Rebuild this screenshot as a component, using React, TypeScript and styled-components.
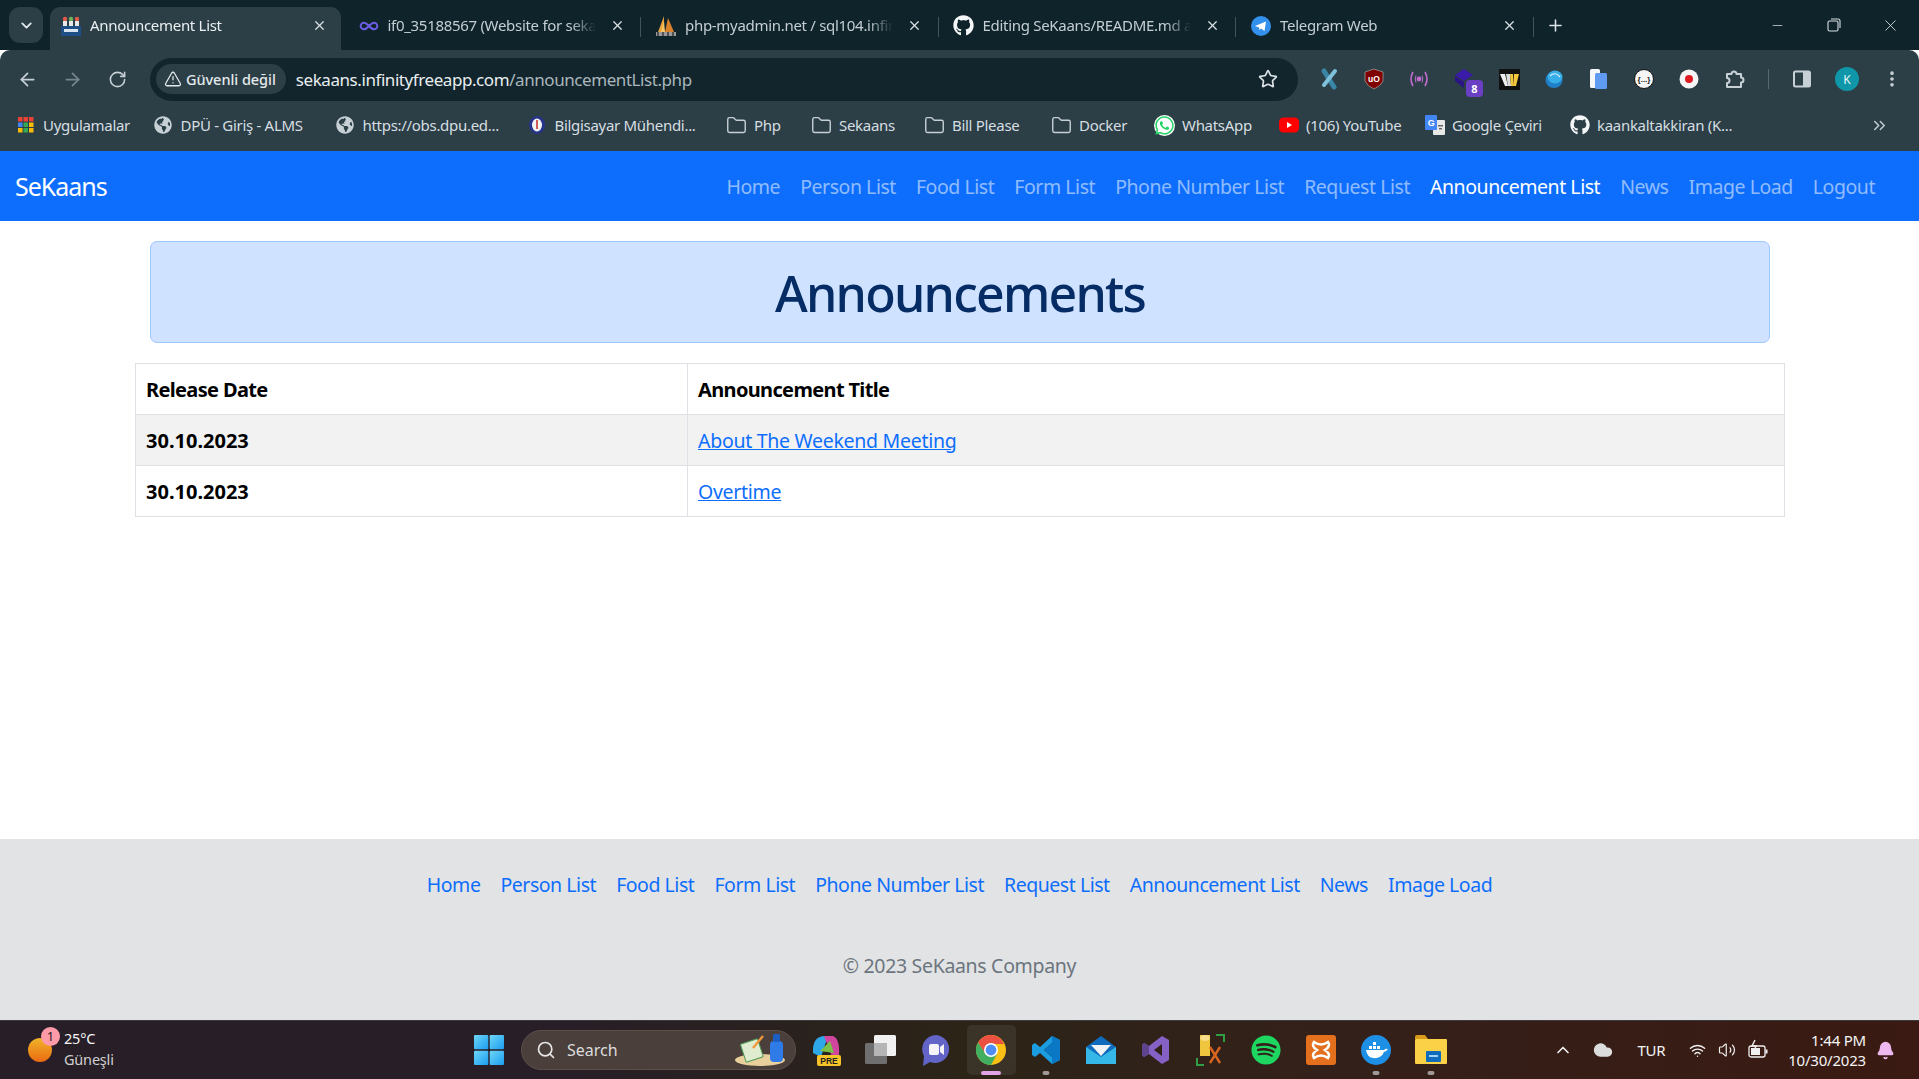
import React from 'react';
import styled, { createGlobalStyle } from 'styled-components';
import {
  ArrowLeft,
  ArrowRight,
  ChevronDown,
  ChevronUp,
  ChevronsRight,
  Folder,
  Minus,
  MoreVertical,
  Plus,
  RotateCw,
  Search,
  Star,
  TriangleAlert,
  Volume2,
  Wifi,
  X,
  Infinity as InfinityIcon,
  Bell,
  Cloud,
} from 'lucide-react';
import { FaGithub, FaGlobeAmericas, FaSpotify, FaWhatsapp } from 'react-icons/fa';

const UI_FONT = '"Noto Sans", "Open Sans", sans-serif';

const GlobalStyle = createGlobalStyle`
  html, body {
    margin: 0;
    padding: 0;
    background: #fff;
    font-family: ${UI_FONT};
  }
  * { box-sizing: border-box; }
`;

// ---- favicons and small drawings ----

const TeamFavicon = () => (
  <svg width="20" height="20" viewBox="0 0 20 20">
    <circle cx="4" cy="3" r="2.2" fill="#e25b4b" />
    <circle cx="10" cy="3" r="2.2" fill="#6fb35a" />
    <circle cx="16" cy="3" r="2.2" fill="#e25b4b" />
    <rect x="2" y="5" width="4" height="5" fill="#e8e8e8" />
    <rect x="8" y="5" width="4" height="5" fill="#e8e8e8" />
    <rect x="14" y="5" width="4" height="5" fill="#e8e8e8" />
    <rect x="0" y="10" width="20" height="10" fill="#1d4f86" />
    <rect x="3" y="13" width="14" height="3" fill="#d8e4f0" />
  </svg>
);

const PmaFavicon = () => (
  <svg width="22" height="22" viewBox="0 0 22 22">
    <polygon points="9,1 3,17 9,17" fill="#e8a33d" />
    <polygon points="13,3 10,17 19,17" fill="#d9822b" />
    <polygon points="9,6 6,17 10,17" fill="#f6c667" />
    <rect x="1" y="17" width="20" height="4" fill="#9a9a9a" />
    <path d="M3 17 V21 M8 17 V21 M13 17 V21 M18 17 V21" stroke="#222" strokeWidth="1.2" />
  </svg>
);

const TelegramFavicon = () => (
  <svg width="20" height="20" viewBox="0 0 20 20">
    <circle cx="10" cy="10" r="10" fill="#3390ec" />
    <polygon points="4,10 15,5.5 13.5,15 10,12.5 8.5,14 8,11.5" fill="#fff" />
  </svg>
);

const AppsGrid = () => (
  <svg width="16" height="16" viewBox="0 0 16 16">
    {['#ea4335', '#ea4335', '#ea4335', '#4285f4', '#34a853', '#fbbc05', '#fbbc05', '#34a853', '#fbbc05'].map(
      (color, i) => (
        <rect key={i} x={(i % 3) * 5.5} y={Math.floor(i / 3) * 5.5} width="4.5" height="4.5" fill={color} />
      ),
    )}
  </svg>
);

const DpuFavicon = () => (
  <svg width="18" height="18" viewBox="0 0 18 18">
    <ellipse cx="9" cy="9" rx="8" ry="9" fill="#27348b" />
    <ellipse cx="9" cy="9" rx="5" ry="6.5" fill="#f3f3f3" />
    <rect x="8.2" y="4" width="1.6" height="9" fill="#c8373a" />
  </svg>
);

const YoutubeFavicon = () => (
  <svg width="20" height="18" viewBox="0 0 20 18">
    <rect x="0" y="1.5" width="20" height="15" rx="4.5" fill="#f00" />
    <polygon points="8,6 8,12 13,9" fill="#fff" />
  </svg>
);

const TranslateFavicon = () => (
  <svg width="20" height="20" viewBox="0 0 20 20">
    <rect x="8" y="5" width="12" height="15" rx="1" fill="#e8e8e8" />
    <rect x="0" y="0" width="12" height="15" rx="1" fill="#4285f4" />
    <text x="6" y="11" fontSize="9" fontWeight="700" fill="#fff" textAnchor="middle" fontFamily="Liberation Sans">
      G
    </text>
    <rect x="13" y="10" width="5" height="1.5" fill="#666" />
    <rect x="14" y="13" width="3" height="1.5" fill="#666" />
  </svg>
);

const WhatsappFavicon = () => (
  <WhatsappBadge>
    <FaWhatsapp size={21} color="#25d366" />
  </WhatsappBadge>
);

const CrossExt = () => (
  <svg width="20" height="22" viewBox="0 0 20 22">
    <path d="M5 3 L15 19" stroke="#3a86a6" strokeWidth="5" strokeLinecap="round" />
    <path d="M16 3 L5 17" stroke="#7fc0da" strokeWidth="4" strokeLinecap="round" />
  </svg>
);

const UblockExt = () => (
  <svg width="20" height="22" viewBox="0 0 20 22">
    <path d="M10 1 L19 4 L19 13 Q17 18 10 21 Q3 18 1 13 L1 4 Z" fill="#800000" stroke="#9a9a9a" strokeWidth="0.8" />
    <text x="10" y="14" fontSize="8.5" fontWeight="700" fill="#fff" textAnchor="middle" fontFamily="Liberation Sans">
      uO
    </text>
  </svg>
);

const SignalExt = () => (
  <svg width="20" height="18" viewBox="0 0 20 18" fill="none" stroke="#c26bd0" strokeWidth="1.6">
    <circle cx="10" cy="9" r="1.6" fill="#c26bd0" />
    <path d="M4 2 Q0 9 4 16 M16 2 Q20 9 16 16" />
    <path d="M7 5.5 Q5.5 9 7 12.5 M13 5.5 Q14.5 9 13 12.5" strokeWidth="1" />
  </svg>
);

const StackExt = () => (
  <ExtBadgeWrap>
    <svg width="22" height="22" viewBox="0 0 22 22">
      <polygon points="11,1 20,7 11,13 2,7" fill="#3a1aa8" />
      <polygon points="2,8 11,14 11,20 2,13" fill="#2c1388" />
    </svg>
    <ExtBadge>8</ExtBadge>
  </ExtBadgeWrap>
);

const WExt = () => (
  <svg width="21" height="21" viewBox="0 0 21 21">
    <rect width="21" height="21" fill="#111" />
    <polygon points="1,5 6,5 9,17 6,17" fill="#eee" />
    <polygon points="7,5 11,5 12,17 9,17" fill="#ddd" />
    <polygon points="11,5 14,5 14,17 12,17" fill="#f4c83c" />
    <polygon points="15,5 20,5 17,17 14,17" fill="#f4c83c" />
  </svg>
);

const DiscExt = () => (
  <svg width="20" height="20" viewBox="0 0 20 20">
    <ellipse cx="10" cy="11" rx="8.5" ry="8" fill="#1f7fc9" />
    <ellipse cx="11" cy="8" rx="7.5" ry="6.5" fill="#37aee8" />
    <path d="M6 7 Q11 2 16 8" stroke="#d9f1fc" strokeWidth="1.2" fill="none" />
  </svg>
);

const PagesExt = () => (
  <svg width="18" height="20" viewBox="0 0 18 20">
    <rect x="0" y="0" width="10" height="19" rx="1.5" fill="#f5f7fa" />
    <rect x="5" y="4" width="12" height="16" rx="1.5" fill="#5f9bf0" />
  </svg>
);

const BracesExt = () => (
  <svg width="20" height="20" viewBox="0 0 20 20">
    <circle cx="10" cy="10" r="9.5" fill="#f5f5f5" stroke="#111" strokeWidth="1" />
    <text x="10" y="13" fontSize="8" fontWeight="700" fill="#222" textAnchor="middle" fontFamily="Liberation Sans">
      {'{...}'}
    </text>
  </svg>
);

const RecordExt = () => (
  <svg width="20" height="20" viewBox="0 0 20 20">
    <circle cx="10" cy="10" r="9.5" fill="#f5f5f5" />
    <circle cx="10" cy="10" r="4" fill="#e01b24" />
  </svg>
);

const ExtensionsPuzzle = () => (
  <svg width="22" height="22" viewBox="0 0 22 22" fill="none" stroke="#c6d0d5" strokeWidth="2" strokeLinejoin="round">
    <path d="M4 6 H8.5 A2.5 2.5 0 0 1 13.5 6 H18 V9.5 A2.5 2.5 0 0 1 18 14.5 V19 H4 V15 A2 2 0 0 0 4 10 Z" />
  </svg>
);

const SidebarIcon = () => (
  <svg width="18" height="18" viewBox="0 0 18 18">
    <rect x="1" y="1.5" width="16" height="15" rx="1.5" fill="none" stroke="#c6d0d5" strokeWidth="2" />
    <rect x="10" y="1.5" width="7" height="15" fill="#c6d0d5" />
  </svg>
);

const RestoreIcon = () => (
  <svg width="14" height="14" viewBox="0 0 14 14" fill="none" stroke="#d9e0e3" strokeWidth="1.1">
    <rect x="1" y="3" width="10" height="10" rx="1.5" />
    <path d="M4 1 H11 Q13 1 13 3 V10" />
  </svg>
);

const WindowsLogo = () => (
  <svg width="30" height="30" viewBox="0 0 30 30">
    <defs>
      <linearGradient id="win" x1="0" y1="0" x2="1" y2="1">
        <stop offset="0" stopColor="#6fd6f7" />
        <stop offset="1" stopColor="#1a9df0" />
      </linearGradient>
    </defs>
    <rect x="0" y="0" width="14.3" height="14.3" rx="1" fill="url(#win)" />
    <rect x="15.7" y="0" width="14.3" height="14.3" rx="1" fill="url(#win)" />
    <rect x="0" y="15.7" width="14.3" height="14.3" rx="1" fill="url(#win)" />
    <rect x="15.7" y="15.7" width="14.3" height="14.3" rx="1" fill="url(#win)" />
  </svg>
);

const SearchArt = () => (
  <svg width="56" height="34" viewBox="0 0 56 34">
    <ellipse cx="26" cy="27" rx="25" ry="6" fill="#e9cf9b" />
    <rect x="9" y="8" width="18" height="19" rx="1" fill="#dfeccf" stroke="#4f9a57" strokeWidth="1" transform="rotate(-18 18 18)" />
    <path d="M19 15 L29 3" stroke="#f0983a" strokeWidth="2.4" />
    <rect x="36" y="8" width="13" height="21" rx="4" fill="#2f7be8" />
    <rect x="39" y="1" width="7" height="8" rx="1.5" fill="#1b5fc4" />
  </svg>
);

const CopilotApp = () => (
  <svg width="32" height="34" viewBox="0 0 32 34">
    <path d="M3 20 Q2 4 14 3 L18 3 L11 24 Z" fill="#2ea7e8" />
    <path d="M14 3 L23 3 Q30 6 29 22 L22 24 Z" fill="#d0459e" />
    <path d="M10 18 L20 8 L24 20 Z" fill="#7bc148" />
    <rect x="7" y="22" width="24" height="11" rx="2" fill="#f6c428" />
    <text x="19" y="31" fontSize="8.5" fontWeight="700" fill="#222" textAnchor="middle" fontFamily="Liberation Sans">
      PRE
    </text>
  </svg>
);

const TaskViewApp = () => (
  <svg width="32" height="30" viewBox="0 0 32 30">
    <rect x="9" y="0" width="22" height="21" rx="1.5" fill="#f1f1f1" />
    <rect x="0" y="8" width="22" height="21" rx="1.5" fill="#6f6f6f" />
    <rect x="9" y="8" width="13" height="13" fill="#b5b5b5" />
  </svg>
);

const MeetApp = () => (
  <svg width="30" height="34" viewBox="0 0 30 34">
    <path d="M15 2 A14 14 0 1 1 9 29 L2 33 L3 23 A14 14 0 0 1 15 2 Z" fill="#6264c7" />
    <rect x="8" y="11" width="10" height="11" rx="2" fill="#f4f4f8" />
    <polygon points="19,14 23,11 23,22 19,19" fill="#f4f4f8" />
  </svg>
);

const ChromeApp = () => (
  <svg width="30" height="30" viewBox="0 0 30 30">
    <circle cx="15" cy="15" r="15" fill="#fbbc05" />
    <path d="M15 0 A15 15 0 0 0 2 7.5 L8.5 18 L15 9 H28 A15 15 0 0 0 15 0 Z" fill="#ea4335" />
    <path d="M2 7.5 A15 15 0 0 0 15 30 L21 19 L9 18 Z" fill="#34a853" />
    <circle cx="15" cy="15" r="7" fill="#fff" />
    <circle cx="15" cy="15" r="5.4" fill="#4285f4" />
  </svg>
);

const VscodeApp = () => (
  <svg width="30" height="30" viewBox="0 0 30 30">
    <path d="M21 1 L29 5 V25 L21 29 L9 18 L4 22 L1 20 V10 L4 8 L9 12 Z M21 8 L13 15 L21 22 Z" fill="#1b9de2" fillRule="evenodd" />
    <path d="M21 1 L29 5 V25 L21 29 Z M21 8 V22 L13 15 Z" fill="#0a78c4" fillRule="evenodd" />
  </svg>
);

const MailApp = () => (
  <svg width="30" height="30" viewBox="0 0 30 30">
    <polygon points="15,1 30,12 30,29 0,29 0,12" fill="#0f6cbd" />
    <polygon points="0,12 15,22 30,12 30,29 0,29" fill="#35b8e8" />
    <polygon points="5,10 25,10 15,21" fill="#f0f3f5" />
  </svg>
);

const VsApp = () => (
  <svg width="30" height="30" viewBox="0 0 30 30">
    <path d="M21 1 L28 5 V25 L21 29 L8 19 L3 22 L1 20 V10 L3 8 L8 11 Z M21 9 L13 15 L21 21 Z" fill="#8661c5" fillRule="evenodd" />
    <path d="M1 10 L3 8 L8 11 V19 L3 22 L1 20 Z" fill="#5e438f" />
  </svg>
);

const DbToolApp = () => (
  <svg width="30" height="32" viewBox="0 0 30 32">
    <path d="M4 1 H14 V22 H4 Z" fill="#f0c63e" />
    <ellipse cx="9" cy="4" rx="5" ry="3" fill="#f7dc8a" />
    <path d="M14 13 L24 29 M24 13 L14 29" stroke="#d9661f" strokeWidth="2.4" />
    <path d="M20 1 H28 V8 M1 24 V31 H8" stroke="#2f9e44" strokeWidth="2" fill="none" />
  </svg>
);

const XamppApp = () => (
  <svg width="30" height="30" viewBox="0 0 30 30">
    <rect width="30" height="30" rx="3" fill="#e4701e" />
    <path d="M8 7 Q15 12 22 7 Q25 11 19 15 Q25 19 22 23 Q15 18 8 23 Q5 19 11 15 Q5 11 8 7 Z" fill="none" stroke="#fff" strokeWidth="2.6" />
  </svg>
);

const DockerApp = () => (
  <svg width="30" height="30" viewBox="0 0 30 30">
    <circle cx="15" cy="15" r="15" fill="#1d8fe5" />
    <path d="M5 15 H23 Q25 13 27 14 Q25 17 23 17 Q20 24 12 23 Q6 22 5 15 Z" fill="#fff" />
    <rect x="8" y="11" width="3" height="3" fill="#fff" />
    <rect x="12" y="11" width="3" height="3" fill="#fff" />
    <rect x="16" y="11" width="3" height="3" fill="#fff" />
    <rect x="12" y="7" width="3" height="3" fill="#fff" />
  </svg>
);

const FilesApp = () => (
  <svg width="32" height="30" viewBox="0 0 32 30">
    <path d="M0 2 Q0 0 2 0 H10 L13 4 H0 Z" fill="#d99c1a" />
    <rect x="0" y="4" width="32" height="25" rx="1" fill="#fbd148" />
    <rect x="11" y="16" width="15" height="11" rx="1" fill="#0f6cbd" />
    <rect x="14" y="20" width="9" height="2" fill="#9fd0f5" />
  </svg>
);

const TrayBattery = () => (
  <svg width="22" height="22" viewBox="0 0 22 22" fill="none" stroke="#f0f0f0" strokeWidth="1.3">
    <rect x="2" y="7" width="16" height="11" rx="2" />
    <rect x="18.5" y="10.5" width="2" height="4" fill="#f0f0f0" stroke="none" />
    <rect x="4" y="9" width="9" height="7" fill="#f0f0f0" stroke="none" />
    <path d="M8 1 L5 7 H9 L7 12" strokeWidth="1.4" />
  </svg>
);

// ---- data ----

const TABS = [
  { title: 'Announcement List', icon: <TeamFavicon />, active: true },
  { title: 'if0_35188567 (Website for seka', icon: <InfinityIcon size={20} color="#6a5be2" strokeWidth={2.4} /> },
  { title: 'php-myadmin.net / sql104.infir', icon: <PmaFavicon /> },
  { title: 'Editing SeKaans/README.md a', icon: <FaGithub size={21} color="#f4f6f7" /> },
  { title: 'Telegram Web', icon: <TelegramFavicon /> },
];

const folderIcon = <Folder size={21} color="#c6d0d5" strokeWidth={1.6} />;
const globeIcon = <FaGlobeAmericas size={18} color="#c6d0d5" />;

const BOOKMARKS = [
  { title: 'Uygulamalar', icon: <AppsGrid />, width: 137.5 },
  { title: 'DPÜ - Giriş - ALMS', icon: globeIcon, width: 182 },
  { title: 'https://obs.dpu.ed...', icon: globeIcon, width: 192 },
  { title: 'Bilgisayar Mühendi...', icon: <DpuFavicon />, width: 199.5 },
  { title: 'Php', icon: folderIcon, width: 85 },
  { title: 'Sekaans', icon: folderIcon, width: 113 },
  { title: 'Bill Please', icon: folderIcon, width: 127 },
  { title: 'Docker', icon: folderIcon, width: 103 },
  { title: 'WhatsApp', icon: <WhatsappFavicon />, width: 124 },
  { title: '(106) YouTube', icon: <YoutubeFavicon />, width: 146 },
  { title: 'Google Çeviri', icon: <TranslateFavicon />, width: 145 },
  { title: 'kaankaltakkiran (K...', icon: <FaGithub size={20} color="#f4f6f7" />, width: 170 },
];

const EXTENSIONS = [
  <CrossExt key="cross" />,
  <UblockExt key="ublock" />,
  <SignalExt key="signal" />,
  <StackExt key="stack" />,
  <WExt key="w" />,
  <DiscExt key="disc" />,
  <PagesExt key="pages" />,
  <BracesExt key="braces" />,
  <RecordExt key="record" />,
  <ExtensionsPuzzle key="puzzle" />,
];

const NAV_LINKS = ['Home', 'Person List', 'Food List', 'Form List', 'Phone Number List', 'Request List', 'Announcement List', 'News', 'Image Load', 'Logout'];
const FOOTER_LINKS = NAV_LINKS.slice(0, -1);

const ROWS = [
  { date: '30.10.2023', title: 'About The Weekend Meeting', striped: true },
  { date: '30.10.2023', title: 'Overtime', striped: false },
];

const APPS_AFTER_SEARCH = [
  { icon: <CopilotApp />, state: 'idle' },
  { icon: <TaskViewApp />, state: 'idle' },
  { icon: <MeetApp />, state: 'idle' },
  { icon: <ChromeApp />, state: 'active' },
  { icon: <VscodeApp />, state: 'running' },
  { icon: <MailApp />, state: 'idle' },
  { icon: <VsApp />, state: 'idle' },
  { icon: <DbToolApp />, state: 'idle' },
  { icon: <FaSpotify size={30} color="#1ed760" />, state: 'idle' },
  { icon: <XamppApp />, state: 'idle' },
  { icon: <DockerApp />, state: 'running' },
  { icon: <FilesApp />, state: 'running' },
];

const App: React.FC = () => (
  <Page>
    <GlobalStyle />
    <TabStrip>
      <TabMenu>
        <ChevronDown size={17} color="#e2e8ea" strokeWidth={2.6} />
      </TabMenu>
      <Tabs>
        {TABS.map((tab) => (
          <Tab key={tab.title} $active={!!tab.active}>
            <TabIcon>{tab.icon}</TabIcon>
            <TabTitle $active={!!tab.active}>{tab.title}</TabTitle>
            <X size={15} color="#dbe2e5" strokeWidth={2} />
          </Tab>
        ))}
      </Tabs>
      <NewTab>
        <Plus size={19} color="#dbe2e5" strokeWidth={2} />
      </NewTab>
      <WindowControls>
        <WindowButton>
          <Minus size={15} color="#d9e0e3" strokeWidth={1.2} />
        </WindowButton>
        <WindowButton>
          <RestoreIcon />
        </WindowButton>
        <WindowButton>
          <X size={19} color="#d9e0e3" strokeWidth={1.1} />
        </WindowButton>
      </WindowControls>
    </TabStrip>

    <Toolbar>
      <ToolButton>
        <ArrowLeft size={21} color="#c6d0d5" strokeWidth={2} />
      </ToolButton>
      <ToolButton>
        <ArrowRight size={21} color="#77868d" strokeWidth={2} />
      </ToolButton>
      <ToolButton>
        <RotateCw size={19} color="#c6d0d5" strokeWidth={2} />
      </ToolButton>
      <Omnibox>
        <SecurityChip>
          <TriangleAlert size={18} color="#e4eaec" strokeWidth={1.7} />
          Güvenli değil
        </SecurityChip>
        <Url>
          sekaans.infinityfreeapp.com<UrlPath>/announcementList.php</UrlPath>
        </Url>
        <Star size={20} color="#dbe2e5" strokeWidth={2} />
      </Omnibox>
      <Extensions>
        {EXTENSIONS.map((ext) => (
          <ToolButton key={ext.key}>{ext}</ToolButton>
        ))}
      </Extensions>
      <ToolbarDivider />
      <SideButton>
        <SidebarIcon />
      </SideButton>
      <SideButton>
        <Avatar>K</Avatar>
      </SideButton>
      <SideButton>
        <MoreVertical size={20} color="#c6d0d5" strokeWidth={2.4} />
      </SideButton>
    </Toolbar>

    <BookmarkBar>
      {BOOKMARKS.map((mark) => (
        <Bookmark key={mark.title} $width={mark.width}>
          <BookmarkIcon>{mark.icon}</BookmarkIcon>
          {mark.title}
        </Bookmark>
      ))}
      <BookmarkMore>
        <ChevronsRight size={19} color="#c6d0d5" strokeWidth={1.8} />
      </BookmarkMore>
    </BookmarkBar>

    <Navbar>
      <Brand>SeKaans</Brand>
      <NavList>
        {NAV_LINKS.map((link) => (
          <NavLink key={link} $active={link === 'Announcement List'}>
            {link}
          </NavLink>
        ))}
      </NavList>
    </Navbar>

    <Main>
      <Banner>
        <BannerTitle>Announcements</BannerTitle>
      </Banner>
      <Table>
        <colgroup>
          <DateCol />
          <col />
        </colgroup>
        <thead>
          <tr>
            <HeadCell>Release Date</HeadCell>
            <HeadCell>Announcement Title</HeadCell>
          </tr>
        </thead>
        <tbody>
          {ROWS.map((row) => (
            <Row key={row.title} $striped={row.striped}>
              <DateCell>{row.date}</DateCell>
              <Cell>
                <TitleLink href="#">{row.title}</TitleLink>
              </Cell>
            </Row>
          ))}
        </tbody>
      </Table>
    </Main>

    <Footer>
      <FooterLinks>
        {FOOTER_LINKS.map((link) => (
          <FooterLink key={link}>{link}</FooterLink>
        ))}
      </FooterLinks>
      <Copyright>© 2023 SeKaans Company</Copyright>
    </Footer>

    <Taskbar>
      <Weather>
        <Sun>
          <SunBadge>1</SunBadge>
        </Sun>
        <WeatherText>
          <span>25°C</span>
          <WeatherNote>Güneşli</WeatherNote>
        </WeatherText>
      </Weather>
      <AppSlot>
        <WindowsLogo />
      </AppSlot>
      <SearchPill>
        <Search size={20} color="#e6e6e6" strokeWidth={2} />
        <SearchLabel>Search</SearchLabel>
        <SearchArt />
      </SearchPill>
      {APPS_AFTER_SEARCH.map((app, i) => (
        <AppSlot key={i} $state={app.state}>
          {app.icon}
        </AppSlot>
      ))}
      <Tray>
        <TrayIcon $width={40}>
          <ChevronUp size={20} color="#f0f0f0" strokeWidth={2} />
        </TrayIcon>
        <TrayIcon $width={40}>
          <Cloud size={20} color="#ddd" fill="#ddd" />
        </TrayIcon>
        <TrayLang>TUR</TrayLang>
        <TrayIcon $width={29}>
          <Wifi size={17} color="#f0f0f0" strokeWidth={2} />
        </TrayIcon>
        <TrayIcon $width={29}>
          <Volume2 size={18} color="#f0f0f0" strokeWidth={1.6} />
        </TrayIcon>
        <TrayIcon $width={33}>
          <TrayBattery />
        </TrayIcon>
        <Clock>
          <span>1:44 PM</span>
          <span>10/30/2023</span>
        </Clock>
        <TrayIcon $width={38}>
          <Bell size={19} color="#eeb8f0" fill="#eeb8f0" />
        </TrayIcon>
      </Tray>
    </Taskbar>
  </Page>
);

// ---- page ----

const Page = styled.div`
  display: flex;
  flex-direction: column;
  height: 1079px;
  overflow: hidden;
`;

// ---- browser chrome ----

const TabStrip = styled.div`
  display: flex;
  align-items: flex-end;
  height: 50px;
  padding-left: 9px;
  background: #0f232b;
`;

const TabMenu = styled.div`
  display: flex;
  align-items: center;
  justify-content: center;
  align-self: flex-start;
  width: 34px;
  height: 36px;
  margin: 7px 7px 0 0;
  border-radius: 11px;
  background: #2c3f47;
`;

const Tabs = styled.div`
  display: flex;
  align-items: flex-end;
`;

const Tab = styled.div<{ $active: boolean }>`
  position: relative;
  display: flex;
  align-items: center;
  width: 290.5px;
  height: 43px;
  margin-right: 7px;
  padding: 0 13.5px 6px 10px;
  border-radius: 10px 10px 0 0;
  background: ${(p) => (p.$active ? '#2c3f47' : 'transparent')};

  &:not(:first-child)::after {
    content: '';
    position: absolute;
    right: -3px;
    top: 10px;
    width: 1px;
    height: 20px;
    background: #43555c;
  }
`;

const TabIcon = styled.span`
  display: flex;
  align-items: center;
  justify-content: center;
  flex: none;
  width: 22px;
  height: 22px;
`;

const TabTitle = styled.span<{ $active: boolean }>`
  flex: 1;
  min-width: 0;
  margin: 0 14px 2px 8px;
  white-space: nowrap;
  font-size: 15px;
  letter-spacing: -0.3px;
  color: ${(p) => (p.$active ? '#e9eef0' : '#c4ced2')};
  mask-image: linear-gradient(to right, #000 88%, transparent);
`;

const NewTab = styled.div`
  display: flex;
  align-items: center;
  justify-content: center;
  align-self: flex-start;
  width: 28px;
  height: 36px;
  margin: 7px 0 0 3.5px;
`;

const WindowControls = styled.div`
  display: flex;
  align-self: flex-start;
  margin-left: auto;
`;

const WindowButton = styled.div`
  display: flex;
  align-items: center;
  justify-content: center;
  width: 56.5px;
  height: 50px;
`;

const Toolbar = styled.div`
  display: flex;
  align-items: center;
  height: 51px;
  padding: 7px 4px 0 4.5px;
  border-radius: 10px 10px 0 0;
  background: #2c3f47;
`;

const ToolButton = styled.div`
  display: flex;
  align-items: center;
  justify-content: center;
  flex: none;
  width: 45px;
  height: 36px;
`;

const Omnibox = styled.div`
  display: flex;
  align-items: center;
  flex: none;
  width: 1148px;
  height: 43px;
  margin-left: 10.5px;
  padding: 0 20px 0 6px;
  border-radius: 22px;
  background: #12252d;
`;

const SecurityChip = styled.div`
  display: flex;
  align-items: center;
  gap: 4px;
  height: 30px;
  padding: 0 10px 0 8px;
  border-radius: 15px;
  background: #2c3f47;
  font-size: 14.5px;
  font-weight: 500;
  letter-spacing: -0.05px;
  color: #e4eaec;
`;

const Url = styled.div`
  flex: 1;
  margin-left: 10px;
  font-size: 17px;
  letter-spacing: -0.43px;
  color: #e9eef0;
`;

const UrlPath = styled.span`
  color: #aab6bb;
`;

const Extensions = styled.div`
  display: flex;
  margin-left: 8.5px;
`;

const ToolbarDivider = styled.div`
  flex: none;
  width: 1px;
  height: 20px;
  margin: 0 11px;
  background: #566870;
`;

const SideButton = styled.div`
  display: flex;
  align-items: center;
  justify-content: center;
  flex: none;
  width: 45px;
  height: 36px;
`;

const Avatar = styled.div`
  display: flex;
  align-items: center;
  justify-content: center;
  width: 24px;
  height: 24px;
  border-radius: 50%;
  background: #0f96a8;
  font-size: 12px;
  color: #e6f6f8;
`;

const BookmarkBar = styled.div`
  display: flex;
  align-items: center;
  height: 50px;
  padding: 0 0 2px 15px;
  background: #2c3f47;
`;

const Bookmark = styled.div<{ $width: number }>`
  display: flex;
  align-items: center;
  flex: none;
  gap: 7px;
  width: ${(p) => p.$width}px;
  white-space: nowrap;
  font-size: 15px;
  letter-spacing: -0.3px;
  color: #d6dee1;
`;

const BookmarkIcon = styled.span`
  display: flex;
  align-items: center;
  justify-content: center;
  flex: none;
  width: 21px;
  height: 21px;
`;

const BookmarkMore = styled.div`
  display: flex;
  margin-left: 131px;
`;

const WhatsappBadge = styled.span`
  display: flex;
  border-radius: 50%;
  background: #fff;
`;

const ExtBadgeWrap = styled.span`
  position: relative;
  display: flex;
`;

const ExtBadge = styled.span`
  position: absolute;
  right: -8px;
  bottom: -7px;
  width: 17px;
  height: 17px;
  border-radius: 4px;
  background: #6a3fc4;
  font-size: 11px;
  font-weight: 700;
  line-height: 17px;
  text-align: center;
  color: #fff;
`;

// ---- site ----

const Navbar = styled.nav`
  display: flex;
  align-items: center;
  justify-content: space-between;
  height: 70px;
  padding: 0 44px 0 15px;
  background: #0d6efd;
`;

const Brand = styled.div`
  font-size: 25px;
  letter-spacing: -1px;
  color: #fff;
`;

const NavList = styled.div`
  display: flex;
  gap: 20px;
`;

const NavLink = styled.a<{ $active: boolean }>`
  font-size: 19.5px;
  letter-spacing: -0.45px;
  color: ${(p) => (p.$active ? '#fff' : 'rgba(255, 255, 255, 0.55)')};
`;

const Main = styled.main`
  flex: 1;
  padding: 20px 134px 0 135px;
`;

const Banner = styled.div`
  display: flex;
  align-items: center;
  justify-content: center;
  height: 102px;
  margin: 0 15px 20px;
  padding-top: 2px;
  border: 1px solid #9ec5fe;
  border-radius: 7px;
  background: #cfe2ff;
`;

const BannerTitle = styled.h1`
  margin: 0;
  font-size: 50px;
  font-weight: 500;
  letter-spacing: -1.75px;
  color: #052c65;
`;

const Table = styled.table`
  width: 100%;
  border-collapse: collapse;
  table-layout: fixed;
`;

const DateCol = styled.col`
  width: 552px;
`;

const Row = styled.tr<{ $striped: boolean }>`
  background: ${(p) => (p.$striped ? '#f2f2f2' : '#fff')};
`;

const Cell = styled.td`
  height: 51px;
  padding: 0 10px;
  border: 1px solid #dee2e6;
  font-size: 19.5px;
  letter-spacing: -0.28px;
  color: #212529;
`;

const HeadCell = styled.th`
  height: 51px;
  padding: 0 10px;
  border: 1px solid #dee2e6;
  font-size: 20px;
  font-weight: 700;
  letter-spacing: -0.65px;
  text-align: left;
  color: #000;
`;

const DateCell = styled(Cell)`
  font-size: 20px;
  font-weight: 700;
  letter-spacing: 0;
  color: #000;
`;

const TitleLink = styled.a`
  color: #0d6efd;
  text-decoration: underline;
`;

const Footer = styled.footer`
  display: flex;
  flex-direction: column;
  align-items: center;
  flex: none;
  height: 181px;
  padding-top: 32px;
  background: #e2e3e5;
`;

const FooterLinks = styled.div`
  display: flex;
  gap: 20px;
`;

const FooterLink = styled.a`
  font-size: 19.5px;
  letter-spacing: -0.46px;
  color: #0d6efd;
`;

const Copyright = styled.div`
  margin-top: 54px;
  font-size: 19.5px;
  letter-spacing: -0.32px;
  color: #6c757d;
`;

// ---- windows taskbar ----

const Taskbar = styled.div`
  display: flex;
  align-items: center;
  flex: none;
  height: 59px;
  border-top: 1px solid #3c3a3c;
  background: linear-gradient(90deg, #271e27 0%, #271e27 30%, #2c2417 50%, #34201a 70%, #3a1a12 100%);
`;

const Weather = styled.div`
  display: flex;
  align-items: center;
  flex: none;
  gap: 12px;
  width: 461.5px;
  padding-left: 28px;
`;

const Sun = styled.div`
  position: relative;
  width: 24px;
  height: 24px;
  border-radius: 50%;
  background: linear-gradient(180deg, #f0b429, #ea6a12);
`;

const SunBadge = styled.span`
  position: absolute;
  right: -8px;
  top: -11px;
  width: 19px;
  height: 19px;
  border-radius: 50%;
  background: #ff9aa8;
  font-size: 13px;
  line-height: 19px;
  text-align: center;
  color: #2a1a20;
`;

const WeatherText = styled.div`
  display: flex;
  flex-direction: column;
  padding-bottom: 2px;
  font-size: 14.5px;
  line-height: 21px;
  letter-spacing: -0.2px;
  color: #f4f4f4;
`;

const WeatherNote = styled.span`
  color: #cfcfcf;
`;

const AppSlot = styled.div<{ $state?: string }>`
  position: relative;
  display: flex;
  align-items: center;
  justify-content: center;
  flex: none;
  width: 55px;
  height: 50px;

  ${(p) =>
    p.$state === 'active' &&
    `
    &::before {
      content: '';
      position: absolute;
      inset: 0 3px;
      border-radius: 5px;
      background: rgba(255, 255, 255, 0.07);
    }
  `}

  ${(p) =>
    (p.$state === 'active' || p.$state === 'running') &&
    `
    &::after {
      content: '';
      position: absolute;
      bottom: 0;
      left: 50%;
      width: ${p.$state === 'active' ? '20px' : '7px'};
      height: 4px;
      border-radius: 2px;
      transform: translateX(-50%);
      background: ${p.$state === 'active' ? '#e0a3e8' : '#a09a96'};
    }
  `}
`;

const SearchPill = styled.div`
  display: flex;
  align-items: center;
  flex: none;
  width: 275px;
  height: 40px;
  margin: 0 2.5px 0 4.5px;
  padding: 0 5px 0 14px;
  border: 1px solid #5c5048;
  border-radius: 20px;
  background: #4a3f3b;
`;

const SearchLabel = styled.span`
  flex: 1;
  margin-left: 11px;
  font-size: 16px;
  color: #dcdcdc;
`;

const Tray = styled.div`
  display: flex;
  align-items: center;
  margin-left: auto;
  margin-right: 15px;
`;

const TrayIcon = styled.div<{ $width: number }>`
  display: flex;
  align-items: center;
  justify-content: center;
  width: ${(p) => p.$width}px;
`;

const TrayLang = styled.div`
  width: 60px;
  padding-right: 3px;
  font-size: 15px;
  letter-spacing: -0.2px;
  text-align: center;
  color: #f4f4f4;
`;

const Clock = styled.div`
  display: flex;
  flex-direction: column;
  align-items: flex-end;
  width: 92px;
  font-size: 15px;
  line-height: 20px;
  letter-spacing: -0.2px;
  color: #f4f4f4;
`;

export default App;
